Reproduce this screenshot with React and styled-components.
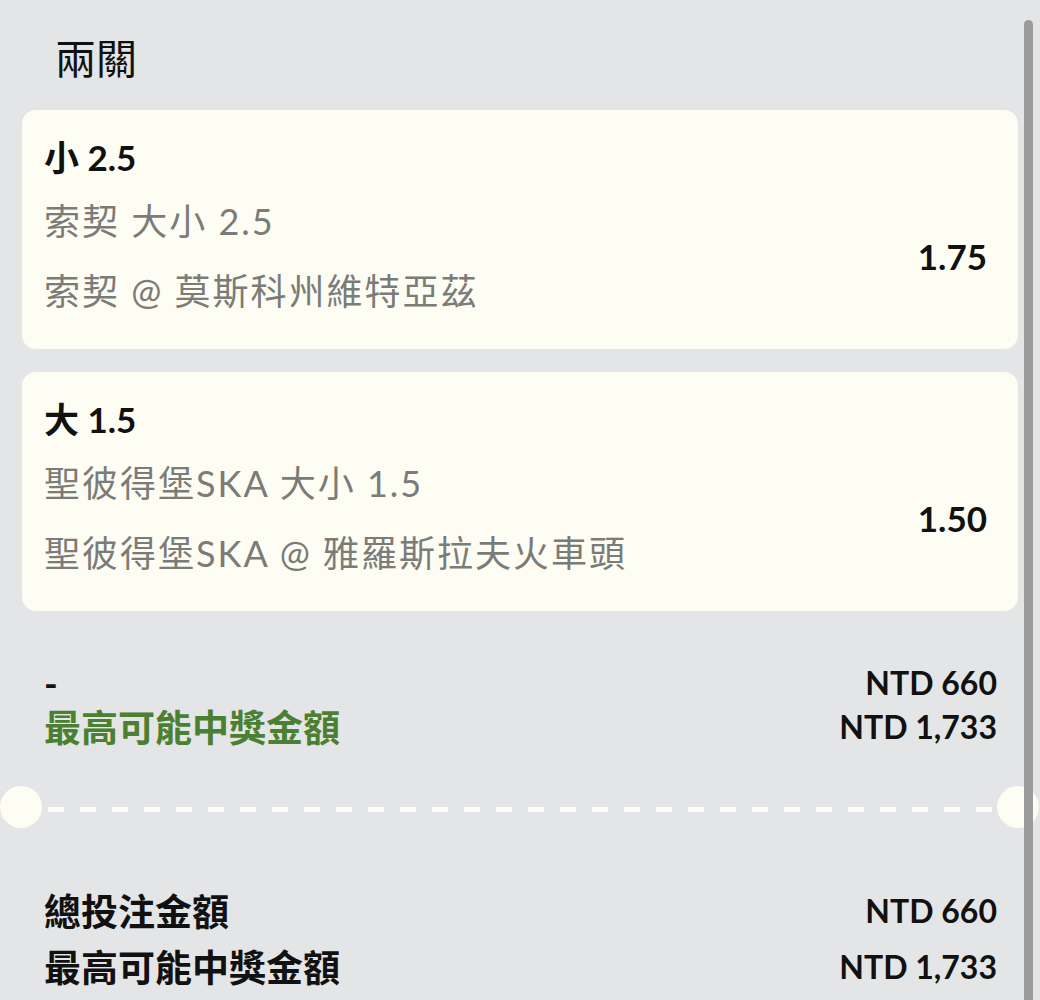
import React from "react";
import styled, { createGlobalStyle } from "styled-components";

const GlobalStyle = createGlobalStyle`
  html, body {
    margin: 0;
    padding: 0;
    background: #e4e5e7;
  }
  body {
    font-family: "Lato", "Noto Sans CJK TC", sans-serif;
    color: #111;
  }
`;

const legs = [
  {
    pick: "小 2.5",
    market: "索契 大小 2.5",
    match: "索契 @ 莫斯科州維特亞茲",
    odds: "1.75",
  },
  {
    pick: "大 1.5",
    market: "聖彼得堡SKA 大小 1.5",
    match: "聖彼得堡SKA @ 雅羅斯拉夫火車頭",
    odds: "1.50",
  },
];

const Page = styled.main`
  position: relative;
  min-height: 1000px;
  padding: 31px 22px 0 22px;
  box-sizing: border-box;
  overflow: hidden;
`;

const Title = styled.h2`
  margin: 0 0 23px;
  padding-left: 33px;
  font-size: 41px;
  font-weight: 400;
  line-height: 56px;
  color: #111;
`;

const CardList = styled.div`
  display: flex;
  flex-direction: column;
  gap: 23px;
`;

const Card = styled.section`
  background: #fdfdf4;
  border-radius: 14px;
  padding: 24px 31px 33px 22px;
`;

const Pick = styled.div`
  font-size: 35px;
  font-weight: 700;
  line-height: 46px;
  margin-bottom: 16px;
`;

const Body = styled.div`
  display: flex;
  align-items: center;
  justify-content: space-between;
`;

const Lines = styled.div`
  display: flex;
  flex-direction: column;
  gap: 20px;
`;

const Line = styled.div`
  font-size: 36px;
  letter-spacing: 2px;
  line-height: 50px;
  color: #7b7b78;
  white-space: nowrap;
`;

const Odds = styled.div`
  font-size: 35px;
  font-weight: 700;
  color: #111;
`;

const Summary = styled.div`
  display: flex;
  flex-direction: column;
  padding: 0 21px 0 22px;
  margin-top: ${({ $top }) => $top}px;
`;

const Row = styled.div`
  display: flex;
  justify-content: space-between;
  align-items: center;
  height: ${({ $h }) => $h}px;
`;

const Label = styled.span`
  font-size: 37px;
  font-weight: 700;
  color: ${({ $green }) => ($green ? "#4b7f31" : "#111")};
`;

const Amount = styled.span`
  font-size: 32px;
  font-weight: 700;
  color: #111;
`;

const Divider = styled.div`
  display: flex;
  align-items: center;
  margin: 38px -22px 0;
  height: 42px;
`;

const Hole = styled.span`
  flex: none;
  width: 42px;
  height: 42px;
  border-radius: 50%;
  background: #fdfdf4;
  margin-right: ${({ $right }) => ($right ? "1px" : "0")};
`;

const Dashes = styled.span`
  flex: 1;
  height: 5px;
  margin: 4px 4px 0 6px;
  background: repeating-linear-gradient(
    to right,
    #fdfdf4 0 16px,
    transparent 16px 32px
  );
`;

const Scrollbar = styled.div`
  position: absolute;
  top: 20px;
  right: 7px;
  width: 9px;
  height: 1000px;
  border-radius: 5px;
  background: #9b9b9b;
`;

export default function App() {
  return (
    <>
      <GlobalStyle />
      <Page>
        <Title>兩關</Title>
        <CardList>
          {legs.map((leg) => (
            <Card key={leg.pick}>
              <Pick>{leg.pick}</Pick>
              <Body>
                <Lines>
                  <Line>{leg.market}</Line>
                  <Line>{leg.match}</Line>
                </Lines>
                <Odds>{leg.odds}</Odds>
              </Body>
            </Card>
          ))}
        </CardList>

        <Summary $top={49}>
          <Row $h={44}>
            <Label>-</Label>
            <Amount>NTD 660</Amount>
          </Row>
          <Row $h={44}>
            <Label $green>最高可能中獎金額</Label>
            <Amount>NTD 1,733</Amount>
          </Row>
        </Summary>

        <Divider>
          <Hole />
          <Dashes />
          <Hole $right />
        </Divider>

        <Summary $top={54}>
          <Row $h={56}>
            <Label>總投注金額</Label>
            <Amount>NTD 660</Amount>
          </Row>
          <Row $h={56}>
            <Label>最高可能中獎金額</Label>
            <Amount>NTD 1,733</Amount>
          </Row>
        </Summary>
        <Scrollbar />
      </Page>
    </>
  );
}
